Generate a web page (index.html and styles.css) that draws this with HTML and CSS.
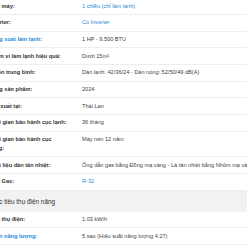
FILE: index.html
```html
<!DOCTYPE html>
<html lang="vi">
<head>
<meta charset="utf-8">
<title>Thông số kỹ thuật</title>
<link rel="stylesheet" href="styles.css">
</head>
<body>
<div class="specs">
  <ul class="list">
    <li class="row"><span class="label">Loại máy:</span><span class="value link">1 chiều (chỉ làm lạnh)</span></li>
    <li class="row"><span class="label">Inverter:</span><span class="value link">Có Inverter</span></li>
    <li class="row"><span class="label link">Công suất làm lạnh:</span><span class="value">1 HP - 9.500 BTU</span></li>
    <li class="row"><span class="label">Phạm vi làm lạnh hiệu quả:</span><span class="value">Dưới 15m²</span></li>
    <li class="row"><span class="label">Độ ồn trung bình:</span><span class="value">Dàn lạnh: 42/36/24 - Dàn nóng: 52/50/49 dB(A)</span></li>
    <li class="row"><span class="label">Dòng sản phẩm:</span><span class="value">2024</span></li>
    <li class="row"><span class="label">Sản xuất tại:</span><span class="value">Thái Lan</span></li>
    <li class="row"><span class="label">Thời gian bảo hành cục lạnh:</span><span class="value">36 tháng</span></li>
    <li class="row"><span class="label">Thời gian bảo hành cục nóng:</span><span class="value">Máy nén 12 năm</span></li>
    <li class="row"><span class="label">Chất liệu dàn tản nhiệt:</span><span class="value">Ống dẫn gas bằng Đồng mạ vàng - Lá tản nhiệt bằng Nhôm mạ vàng</span></li>
    <li class="row"><span class="label">Loại Gas:</span><span class="value link">R-32</span></li>
  </ul>
  <h3 class="section">Mức tiêu thụ điện năng</h3>
  <ul class="list">
    <li class="row"><span class="label">Tiêu thụ điện:</span><span class="value">1.03 kW/h</span></li>
    <li class="row"><span class="label link">Nhãn năng lượng:</span><span class="value">5 sao (Hiệu suất năng lượng 4.27)</span></li>
  </ul>
</div>
</body>
</html>
```
FILE: styles.css
```css
html, body {
  margin: 0;
  padding: 0;
  background: #fff;
  overflow: hidden;
}
.specs {
  width: 440px;
  margin-left: -11.5px;
  margin-top: -1.85px;
  font-family: "Liberation Sans", Arial, sans-serif;
  font-size: 5.6px;
  color: #333;
}
.list {
  list-style: none;
  margin: 0;
  padding: 0;
}
.row {
  display: grid;
  grid-template-columns: 78.5px 1fr;
  column-gap: 15px;
  padding: 3.35px 0;
  line-height: 9px;
  border-bottom: 1px solid #eeeeee;
}
.label {
  font-weight: bold;
  color: #333;
}
.value {
  white-space: nowrap;
  color: #444;
}
.link {
  color: #288ad6;
}
.section {
  margin: 0;
  background: #f2f2f2;
  font-size: 6.4px;
  font-weight: normal;
  line-height: 21px;
  padding-left: 1.2px;
  color: #333;
}
```
